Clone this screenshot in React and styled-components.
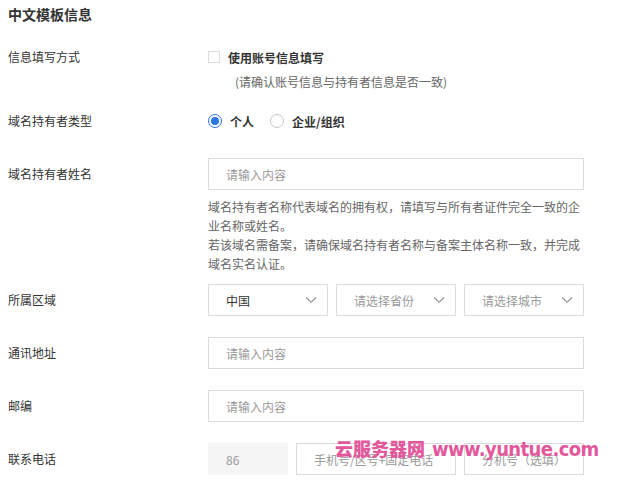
import React from "react";
import styled, { createGlobalStyle } from "styled-components";

const Global = createGlobalStyle`
  html, body { margin: 0; padding: 0; background: #fff; }
  body { font-family: "Noto Sans CJK SC", "Noto Sans", sans-serif; color: #333; }
`;

const Page = styled.div`
  position: relative;
  width: 619px;
  height: 484px;
  overflow: hidden;
  padding: 0 0 0 8px;
  box-sizing: border-box;
`;

const Title = styled.h2`
  margin: 0;
  font-size: 14px;
  font-weight: 700;
  line-height: 28px;
  color: #333;
  margin-bottom: 13px;
`;

const FormItem = styled.div`
  display: grid;
  grid-template-columns: 200px 376px;
  margin-bottom: ${(p) => p.$gap}px;
`;

const Label = styled.div`
  font-size: 12px;
  line-height: 32px;
  color: #333;
`;

const Control = styled.div`
  display: flex;
  flex-direction: column;
`;

const Inline = styled.div`
  display: flex;
  align-items: center;
  height: 32px;
  gap: ${(p) => p.$gap || 8}px;
`;

const CheckBox = styled.span`
  width: 12px;
  height: 12px;
  border: 1px solid #dcdcdc;
  box-sizing: border-box;
  background: #fff;
`;

const BoldText = styled.span`
  font-size: 12px;
  font-weight: 700;
  color: #333;
  margin-right: ${(p) => p.$mr || 0}px;
`;

const Hint = styled.div`
  font-size: 12px;
  line-height: 18px;
  color: #666;
  padding-left: 27px;
`;

const Radio = styled.span`
  width: 14px;
  height: 14px;
  border-radius: 50%;
  box-sizing: border-box;
  border: 1px solid ${(p) => (p.$checked ? "#2a78e4" : "#c8c8c8")};
  display: flex;
  align-items: center;
  justify-content: center;
  &::after {
    content: "";
    width: 8px;
    height: 8px;
    border-radius: 50%;
    background: ${(p) => (p.$checked ? "#2a78e4" : "transparent")};
  }
`;

const Input = styled.div`
  height: 32px;
  box-sizing: border-box;
  border: 1px solid #dcdcdc;
  background: ${(p) => (p.$disabled ? "#f5f5f5" : "#fff")};
  border-color: ${(p) => (p.$disabled ? "#f5f5f5" : "#dcdcdc")};
  padding-left: ${(p) => p.$pl || 17}px;
  font-size: 12px;
  color: ${(p) => (p.$dark ? "#333" : "#9a9a9a")};
  display: flex;
  align-items: center;
  justify-content: space-between;
  padding-right: 10px;
  width: ${(p) => (p.$w ? p.$w + "px" : "auto")};
`;

const Desc = styled.div`
  margin-top: 7px;
  font-size: 12px;
  line-height: 19px;
  color: #666;
  white-space: nowrap;
`;

const Row = styled.div`
  display: flex;
  gap: 8px;
`;

const Watermark = styled.div`
  position: absolute;
  left: 335px;
  top: 437px;
  display: flex;
  align-items: baseline;
  gap: 7px;
  color: #e2589b;
  white-space: nowrap;
  line-height: 22px;
`;

const WmCn = styled.span`
  font-family: "Noto Sans CJK SC", sans-serif;
  font-size: 18px;
  font-weight: 900;
`;

const WmEn = styled.span`
  font-family: "DejaVu Sans Condensed", "DejaVu Sans", sans-serif;
  font-stretch: condensed;
  font-size: 20px;
  font-weight: 700;
  letter-spacing: -0.6px;
`;

const Chevron = () => (
  <svg width="12" height="8" viewBox="0 0 12 8" fill="none">
    <path d="M1 1.5 L6 6.2 L11 1.5" stroke="#9a9a9a" strokeWidth="1.2" />
  </svg>
);

export default function App() {
  return (
    <>
      <Global />
      <Page>
        <Title>中文模板信息</Title>

        <FormItem $gap={14}>
          <Label>信息填写方式</Label>
          <Control>
            <Inline $gap={8}>
              <CheckBox />
              <BoldText>使用账号信息填写</BoldText>
            </Inline>
            <Hint>(请确认账号信息与持有者信息是否一致)</Hint>
          </Control>
        </FormItem>

        <FormItem $gap={21}>
          <Label>域名持有者类型</Label>
          <Control>
            <Inline $gap={8}>
              <Radio $checked />
              <BoldText $mr={8}>个人</BoldText>
              <Radio />
              <BoldText>企业/组织</BoldText>
            </Inline>
          </Control>
        </FormItem>

        <FormItem $gap={11}>
          <Label>域名持有者姓名</Label>
          <Control>
            <Input>请输入内容</Input>
            <Desc>
              域名持有者名称代表域名的拥有权，请填写与所有者证件完全一致的企
              <br />
              业名称或姓名。
              <br />
              若该域名需备案，请确保域名持有者名称与备案主体名称一致，并完成
              <br />
              域名实名认证。
            </Desc>
          </Control>
        </FormItem>

        <FormItem $gap={21}>
          <Label>所属区域</Label>
          <Row>
            <Input $w={120} $dark>
              中国
              <Chevron />
            </Input>
            <Input $w={120}>
              请选择省份
              <Chevron />
            </Input>
            <Input $w={120}>
              请选择城市
              <Chevron />
            </Input>
          </Row>
        </FormItem>

        <FormItem $gap={21}>
          <Label>通讯地址</Label>
          <Input>请输入内容</Input>
        </FormItem>

        <FormItem $gap={21}>
          <Label>邮编</Label>
          <Input>请输入内容</Input>
        </FormItem>

        <FormItem $gap={0}>
          <Label>联系电话</Label>
          <Row>
            <Input $w={80} $disabled $pl={17}>86</Input>
            <Input $w={160} $pl={17}>手机号/区号+固定电话</Input>
            <Input $w={120} $pl={17}>分机号（选填）</Input>
          </Row>
        </FormItem>

        <Watermark>
          <WmCn>云服务器网</WmCn>
          <WmEn>www.yuntue.com</WmEn>
        </Watermark>
      </Page>
    </>
  );
}
